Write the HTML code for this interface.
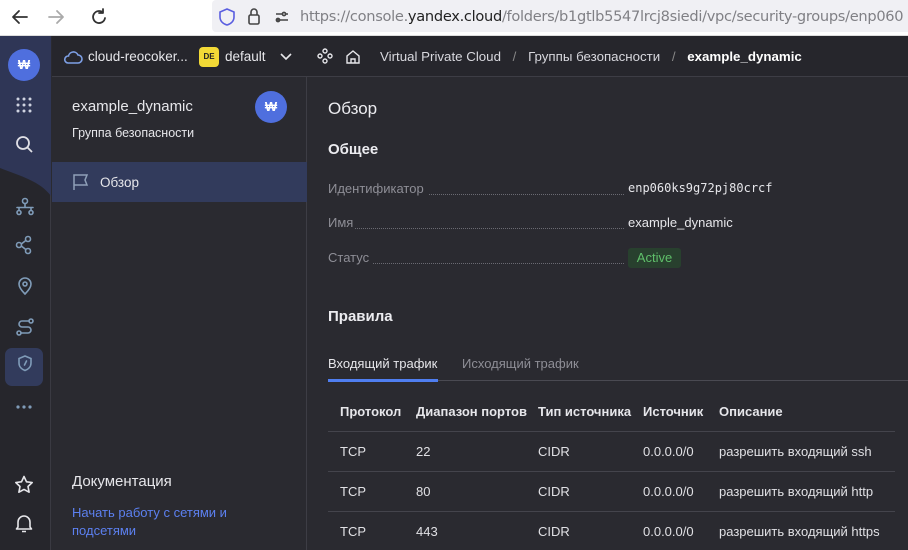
<!DOCTYPE html>
<html><head><meta charset="utf-8"><style>
*{margin:0;padding:0;box-sizing:border-box}
body{width:908px;height:550px;overflow:hidden;background:#2a2a30;font-family:"Liberation Sans","DejaVu Sans",sans-serif;color:#e6e6ea;position:relative}
.abs{position:absolute}
.browser{left:0;top:0;width:908px;height:36px;background:#fff;border-bottom:1px solid #ddd}
.url{left:212px;top:0;width:700px;height:32px;background:#f0f0f4;border-radius:4px 0 0 4px}
.urltext{left:300px;top:8px;font-size:14.6px;color:#808085;white-space:nowrap;font-family:"DejaVu Sans","Liberation Sans",sans-serif;letter-spacing:-0.3px}
.urltext b{font-weight:normal;color:#222}
.rail{left:0;top:36px;width:51px;height:514px;background:#26262c;border-right:1px solid #3a3a42}
.header{left:52px;top:36px;width:856px;height:41px;background:#26262c;border-bottom:1px solid #3d3d45}
.side{left:52px;top:77px;width:255px;height:473px;background:#2a2a30;border-right:1px solid #3d3d45}
.t{position:absolute;white-space:nowrap}
.dots{position:absolute;border-bottom:1px dotted #6a6a72;height:1px}
.row{position:absolute;left:328px;width:567px;height:1px;background:#44444c}
.th{font-size:13px;color:#e6e6ea;font-weight:bold}
.td{font-size:13px;color:#e0e0e4}
</style></head><body>
<div class="abs browser"></div>
<svg class="abs" style="left:10px;top:8px" width="100" height="20" viewBox="0 0 100 20" fill="none" stroke-width="1.8" stroke-linecap="round" stroke-linejoin="round">
<path d="M17 9H3M9 3L3 9l6 6" stroke="#333"/>
<path d="M39 9h14M47 3l6 6-6 6" stroke="#aaa"/>
<path d="M93 4.5A6 6 0 1 0 95 10M93 1v4h-4" stroke="#333"/>
</svg>
<div class="abs url"></div>
<svg class="abs" style="left:218px;top:7px" width="80" height="20" viewBox="0 0 80 20" fill="none" stroke-width="1.6">
<path d="M9 2l7 3v5c0 4-3 7-7 8-4-1-7-4-7-8V5z" stroke="#5a5ee0"/>
<rect x="31" y="8" width="10" height="9" rx="1.5" stroke="#444"/><path d="M33 8V5a3 3 0 0 1 6 0v3" stroke="#444"/>
<path d="M58 7h6M58 13h12M68 7h2" stroke="#444"/><circle cx="66" cy="7" r="1.6" stroke="#444"/><circle cx="60" cy="13" r="1.6" stroke="#444"/>
</svg>
<div class="abs urltext">https://console.<b>yandex.cloud</b>/folders/b1gtlb5547lrcj8siedi/vpc/security-groups/enp060</div>

<div class="abs rail"></div>
<svg class="abs" style="left:0;top:36px" width="51" height="160"><path d="M0 0H51V160C40 145 20 140 0 132Z" fill="#2f3656"/></svg>
<div class="abs" style="left:8px;top:49px;width:32px;height:32px;border-radius:50%;background:#4f6fde;color:#fff;font-size:13px;font-weight:bold;text-align:center;line-height:32px">₩</div>
<svg class="abs" style="left:15px;top:96px" width="18" height="18"><g fill="#cfd3e0"><circle cx="3" cy="3" r="1.5"/><circle cx="9" cy="3" r="1.5"/><circle cx="15" cy="3" r="1.5"/><circle cx="3" cy="9" r="1.5"/><circle cx="9" cy="9" r="1.5"/><circle cx="15" cy="9" r="1.5"/><circle cx="3" cy="15" r="1.5"/><circle cx="9" cy="15" r="1.5"/><circle cx="15" cy="15" r="1.5"/></g></svg>
<svg class="abs" style="left:15px;top:135px" width="20" height="20" fill="none" stroke="#e0e0e6" stroke-width="1.8"><circle cx="8" cy="8" r="6"/><path d="M12.5 12.5L17 17"/></svg>
<div class="abs" style="left:5px;top:348px;width:38px;height:38px;border-radius:7px;background:#323b5c"></div>
<svg class="abs" style="left:14px;top:196px" width="22" height="320" fill="none" stroke="#7f9bb8" stroke-width="1.6" stroke-linecap="round">
<circle cx="11" cy="5" r="2.5"/><path d="M11 7.5v4M3 11.5h16M5 11.5v3M17 11.5v3"/><circle cx="5" cy="16.5" r="2"/><circle cx="17" cy="16.5" r="2"/>
<circle cx="14" cy="43" r="2.5"/><circle cx="5" cy="49" r="2.5"/><circle cx="14" cy="55" r="2.5"/><path d="M7.3 48l4.5-3.5M7.3 50l4.5 3.5"/>
<path d="M11 98c-4-4-6-7-6-10a6 6 0 0 1 12 0c0 3-2 6-6 10z"/><circle cx="11" cy="88" r="2"/>
<circle cx="17" cy="125" r="2"/><circle cx="5" cy="137" r="2"/><path d="M15 125H8a3 3 0 0 0 0 6h6a3 3 0 0 1 0 6H7"/>
<path d="M11 160l6 2.5v4.5c0 4-3 6.5-6 7.5-3-1-6-3.5-6-7.5v-4.5z"/><path d="M12.5 165l-2 4"/>
</svg>
<svg class="abs" style="left:14px;top:403px" width="22" height="8" fill="#7f9bb8"><circle cx="4" cy="4" r="1.6"/><circle cx="10" cy="4" r="1.6"/><circle cx="16" cy="4" r="1.6"/></svg>
<svg class="abs" style="left:14px;top:475px" width="22" height="60" fill="none" stroke="#e6e6ea" stroke-width="1.6" stroke-linejoin="round">
<path d="M10 1.5l2.5 5.3 5.7.7-4.2 4 1.1 5.7L10 14.4l-5.1 2.8L6 11.5 1.8 7.5l5.7-.7z"/>
<path d="M4 52V47a6 6 0 0 1 12 0v5l1.5 2h-15zM8 56.5h4"/>
</svg>

<div class="abs header"></div>
<svg class="abs" style="left:63px;top:49px" width="20" height="16" fill="none" stroke="#7ea0e6" stroke-width="1.6"><path d="M5 14h10a4 4 0 0 0 0-8 5 5 0 0 0-9.5 1A3.5 3.5 0 0 0 5 14z"/></svg>
<div class="t" style="left:88px;top:49px;font-size:13.5px;color:#e6e6ea">cloud-reocoker...</div>
<div class="abs" style="left:199px;top:47px;width:20px;height:20px;border-radius:4px;background:#f2d936;color:#222;font-size:8px;font-weight:bold;text-align:center;line-height:20px">DE</div>
<div class="t" style="left:225px;top:49px;font-size:13.5px;color:#e6e6ea">default</div>
<svg class="abs" style="left:280px;top:52px" width="12" height="10" fill="none" stroke="#e6e6ea" stroke-width="1.6"><path d="M1 2l5 5 5-5"/></svg>
<svg class="abs" style="left:317px;top:48px" width="46" height="18" fill="none" stroke="#e6e6ea" stroke-width="1.4">
<circle cx="8" cy="3" r="2"/><circle cx="3" cy="8" r="2"/><circle cx="13" cy="8" r="2"/><circle cx="8" cy="13" r="2"/>
<path d="M30 15V8l6-5 6 5v7zM34 15v-4h4v4"/></svg>
<div class="t" style="left:380px;top:49px;font-size:13.3px;color:#d8d8de">Virtual Private Cloud <span style="color:#888;margin:0 8px">/</span> Группы безопасности <span style="color:#888;margin:0 8px">/</span> <b style="color:#fff">example_dynamic</b></div>

<div class="abs side"></div>
<div class="t" style="left:72px;top:98px;font-size:15px;color:#e6e6ea">example_dynamic</div>
<div class="t" style="left:72px;top:126px;font-size:12.5px;color:#e6e6ea">Группа безопасности</div>
<div class="abs" style="left:255px;top:91px;width:32px;height:32px;border-radius:50%;background:#4f6fde;color:#fff;font-size:13px;font-weight:bold;text-align:center;line-height:32px">₩</div>
<div class="abs" style="left:52px;top:162px;width:255px;height:40px;background:#323b5c"></div>
<svg class="abs" style="left:72px;top:173px" width="18" height="18" fill="none" stroke="#8fa0b8" stroke-width="1.5"><path d="M2 17V2h13l-2 5 2 5H2"/></svg>
<div class="t" style="left:100px;top:175px;font-size:13.5px;color:#e6e6ea">Обзор</div>
<div class="t" style="left:72px;top:473px;font-size:15px;color:#e6e6ea">Документация</div>
<div class="t" style="left:72px;top:504px;font-size:13px;color:#5c80f0;line-height:18px;white-space:normal;width:200px">Начать работу с сетями и подсетями</div>

<div class="t" style="left:328px;top:99px;font-size:17px;color:#ececf0">Обзор</div>
<div class="t" style="left:328px;top:141px;font-size:15px;font-weight:bold;color:#ececf0">Общее</div>
<div class="t" style="left:328px;top:181px;font-size:13px;color:#8e8e96">Идентификатор</div>
<div class="dots" style="left:429px;top:194px;width:195px"></div>
<div class="t" style="left:628px;top:181px;font-size:12px;font-family:'DejaVu Sans Mono','Liberation Mono',monospace;color:#e6e6ea">enp060ks9g72pj80crcf</div>
<div class="t" style="left:328px;top:215px;font-size:13px;color:#8e8e96">Имя</div>
<div class="dots" style="left:355px;top:228px;width:269px"></div>
<div class="t" style="left:628px;top:215px;font-size:13px;color:#e6e6ea">example_dynamic</div>
<div class="t" style="left:328px;top:250px;font-size:13px;color:#8e8e96">Статус</div>
<div class="dots" style="left:373px;top:263px;width:251px"></div>
<div class="abs" style="left:628px;top:248px;width:53px;height:20px;border-radius:3px;background:#28402e;color:#5fbf6a;font-size:13px;text-align:center;line-height:20px">Active</div>

<div class="t" style="left:328px;top:308px;font-size:15px;font-weight:bold;color:#ececf0">Правила</div>
<div class="t" style="left:328px;top:356px;font-size:13px;color:#e6e6ea">Входящий трафик</div>
<div class="t" style="left:462px;top:356px;font-size:13px;color:#8e8e96">Исходящий трафик</div>
<div class="abs" style="left:328px;top:380px;width:580px;height:1px;background:#4a4a52"></div>
<div class="abs" style="left:328px;top:379px;width:110px;height:3px;background:#4f7ef0"></div>

<div class="t th" style="left:340px;top:404px">Протокол</div>
<div class="t th" style="left:416px;top:404px">Диапазон портов</div>
<div class="t th" style="left:538px;top:404px">Тип источника</div>
<div class="t th" style="left:643px;top:404px">Источник</div>
<div class="t th" style="left:719px;top:404px">Описание</div>
<div class="row" style="top:431px"></div>
<div class="row" style="top:471px"></div>
<div class="row" style="top:511px"></div>
<div class="t td" style="left:340px;top:444px">TCP</div><div class="t td" style="left:416px;top:444px">22</div><div class="t td" style="left:538px;top:444px">CIDR</div><div class="t td" style="left:643px;top:444px">0.0.0.0/0</div><div class="t td" style="left:719px;top:444px">разрешить входящий ssh</div>
<div class="t td" style="left:340px;top:484px">TCP</div><div class="t td" style="left:416px;top:484px">80</div><div class="t td" style="left:538px;top:484px">CIDR</div><div class="t td" style="left:643px;top:484px">0.0.0.0/0</div><div class="t td" style="left:719px;top:484px">разрешить входящий http</div>
<div class="t td" style="left:340px;top:524px">TCP</div><div class="t td" style="left:416px;top:524px">443</div><div class="t td" style="left:538px;top:524px">CIDR</div><div class="t td" style="left:643px;top:524px">0.0.0.0/0</div><div class="t td" style="left:719px;top:524px">разрешить входящий https</div>
</body></html>
